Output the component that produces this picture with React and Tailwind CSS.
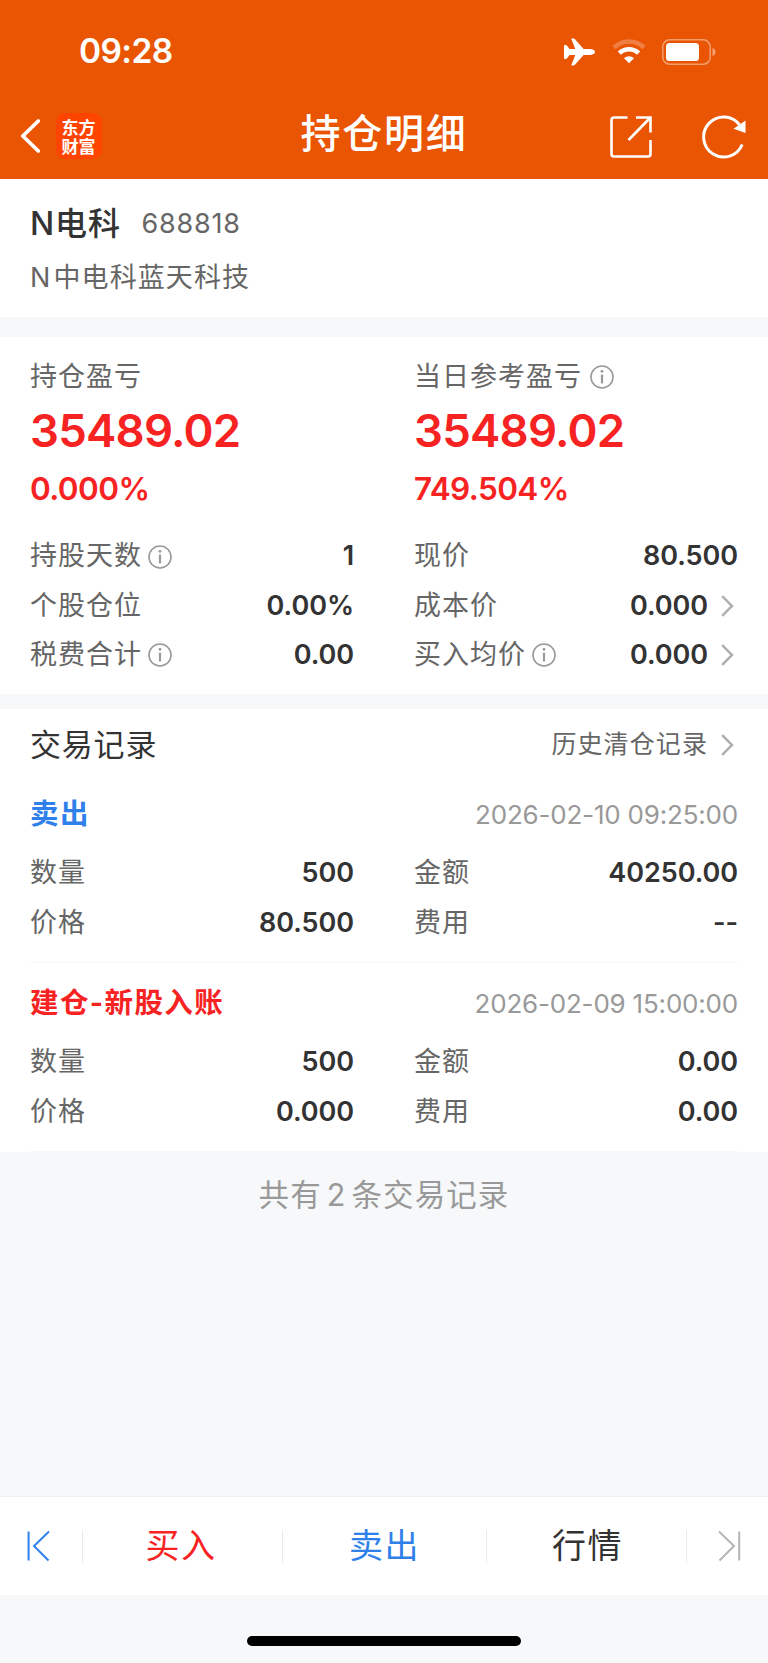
import { useState } from 'react';

const stock = {
  name: 'N电科',
  code: '688818',
  prefix: 'N',
  company: '中电科蓝天科技',
};

const positionRows = [
  { label: '持股天数', value: '1', info: true },
  { label: '现价', value: '80.500' },
  { label: '个股仓位', value: '0.00%' },
  { label: '成本价', value: '0.000', link: true },
  { label: '税费合计', value: '0.00', info: true },
  { label: '买入均价', value: '0.000', info: true, link: true },
];

const records = [
  {
    id: 1,
    type: '卖出',
    side: 'sell',
    time: '2026-02-10 09:25:00',
    rows: [
      { label: '数量', value: '500' },
      { label: '金额', value: '40250.00' },
      { label: '价格', value: '80.500' },
      { label: '费用', value: '--' },
    ],
  },
  {
    id: 2,
    type: '建仓-新股入账',
    side: 'buy',
    time: '2026-02-09 15:00:00',
    rows: [
      { label: '数量', value: '500' },
      { label: '金额', value: '0.00' },
      { label: '价格', value: '0.000' },
      { label: '费用', value: '0.00' },
    ],
  },
];

const InfoIcon = () => (
  <svg className="w-6 h-6 shrink-0" viewBox="0 0 24 24" fill="none" stroke="#999">
    <circle cx="12" cy="12" r="11" strokeWidth="1.6" />
    <path d="M12 9.6V18.4" strokeWidth="2.2" />
    <circle cx="12" cy="6.3" r="1.4" fill="#999" stroke="none" />
  </svg>
);

const ChevronIcon = () => (
  <svg className="w-[13px] h-[22px] mr-[4px] ml-[13px] shrink-0" viewBox="0 0 13 22" fill="none" stroke="#b0b0b0" strokeWidth="2.5">
    <path d="M1.2 1.2L11 11L1.2 20.8" />
  </svg>
);

const StatusBar = () => (
  <div className="h-[103px] flex items-center justify-between pl-[79px] pr-[51px]">
    <span className="text-[33.5px] font-semibold tracking-[-0.6px]">09:28</span>
    <div className="flex items-center">
      <svg className="w-[31px] h-[28px]" viewBox="0 0 31 28" fill="#fff">
        <path d="M31 14C31 15.6 28.6 16.9 26 16.9H19.6L11.2 26.6C10.8 27.1 10.3 27.4 9.7 27.4H8.2C7.6 27.4 7.3 26.9 7.5 26.4L11.3 16.9H5.6L3 20.3C2.7 20.7 2.3 20.9 1.8 20.9H0.6C0.2 20.9 0 20.6 0 20.2V7.8C0 7.4 0.2 7.1 0.6 7.1H1.8C2.3 7.1 2.7 7.3 3 7.7L5.6 11.1H11.3L7.5 1.6C7.3 1.1 7.6 0.6 8.2 0.6H9.7C10.3 0.6 10.8 0.9 11.2 1.4L19.6 11.1H26C28.6 11.1 31 12.4 31 14Z" />
      </svg>
      <svg className="w-[34px] h-[25px] ml-[17px]" viewBox="0 0 34 25" fill="none" stroke="#fff">
        <path d="M2 8.6A21.5 21.5 0 0 1 32 8.6" strokeWidth="4.6" opacity="0.25" />
        <path d="M7.4 14.2A13.8 13.8 0 0 1 26.6 14.2" strokeWidth="4.6" />
        <path d="M17 24.2L12 19.3A7.2 7.2 0 0 1 22 19.3Z" fill="#fff" stroke="none" />
      </svg>
      <svg className="w-[55px] h-[26px] ml-[16px]" viewBox="0 0 55 26" fill="none">
        <rect x="0.8" y="0.8" width="47.4" height="24.4" rx="7" stroke="#fff" strokeWidth="1.5" opacity="0.42" />
        <rect x="4" y="4" width="33" height="18" rx="3.6" fill="#fff" />
        <path d="M50.5 9V17C52.2 16.4 53.6 14.9 53.6 13C53.6 11.1 52.2 9.6 50.5 9Z" fill="#fff" opacity="0.45" />
      </svg>
    </div>
  </div>
);

const NavBar = () => (
  <div className="h-[76px] flex items-start justify-between pl-[20px] pr-[22px]">
    <div className="w-[168px] flex items-center pt-[10px]">
      <svg className="w-[22px] h-[36px]" viewBox="0 0 22 36" fill="none" stroke="#fff" strokeWidth="3.8" strokeLinecap="round" strokeLinejoin="round">
        <path d="M18.3 3L2.8 18L18.3 33" />
      </svg>
      <div className="w-[46px] h-[46px] ml-[13.5px] rounded-[9px] bg-[#ff4400] flex items-center justify-center">
        <p className="font-['Noto_Sans_CJK_SC'] text-[17px] leading-[19px] font-bold">
          东方<br />财富
        </p>
      </div>
    </div>
    <h1 className="ml-[4px] text-[40px] leading-[62px] font-medium tracking-[1.8px]">持仓明细</h1>
    <div className="w-[170px] flex items-center justify-end pt-[12px]">
      <svg className="w-[44px] h-[44px]" viewBox="0 0 44 44" fill="none" stroke="#fff" strokeWidth="2.6">
        <path d="M18.5 2.5H5A2.5 2.5 0 0 0 2.5 5V39A2.5 2.5 0 0 0 5 41.5H39A2.5 2.5 0 0 0 41.5 39V25" />
        <path d="M27 2.5H41.5V17.5" />
        <path d="M41 3L19.5 25" />
      </svg>
      <svg className="w-[44px] h-[44px] ml-[49px]" viewBox="0 0 44 44" fill="none">
        <path d="M38 10.5A20 20 0 1 0 40.2 29.5" stroke="#fff" strokeWidth="3" />
        <path d="M43.5 5.5L31.5 13.8L43.5 18Z" fill="#fff" />
      </svg>
    </div>
  </div>
);

const Row = ({ label, value, info, link }) => (
  <div className="h-[49.2px] flex items-center">
    <span className="text-[27px] tracking-[1px] text-[#666]">{label}</span>
    {info && <span className="ml-[5.5px]"><InfoIcon /></span>}
    <span className="ml-auto text-[27px] font-semibold tracking-[-0.05px] text-[#333]">{value}</span>
    {link && <ChevronIcon />}
  </div>
);

const Profit = ({ label, amount, percent, info }) => (
  <div>
    <div className="h-[40px] flex items-center text-[27px] tracking-[1px] text-[#666]">
      {label}
      {info && <span className="ml-[8px]"><InfoIcon /></span>}
    </div>
    <div className="h-[69px] flex items-center text-[45.5px] font-semibold tracking-[-0.75px] text-[#f72323]">{amount}</div>
    <div className="h-[46px] flex items-center text-[31.5px] font-semibold tracking-[-0.6px] text-[#f72323]">{percent}</div>
  </div>
);

const TradeRecord = ({ record }) => (
  <div className="h-[189px] mx-[30px] border-b-[1.5px] border-[#f6f6f7]">
    <div className="h-[75px] pt-[5px] flex items-center justify-between">
      <span className={`text-[28.5px] font-bold tracking-[1.4px] ${record.side === 'sell' ? 'text-[#2f80ea]' : 'text-[#f72323]'}`}>
        {record.type}
      </span>
      <span className="text-[26px] text-[#999] tracking-[-0.2px]">{record.time}</span>
    </div>
    <div className="grid grid-cols-2 gap-x-[60px]">
      {record.rows.map(row => (
        <Row key={row.label} {...row} />
      ))}
    </div>
  </div>
);

const BottomBar = () => {
  const [active, setActive] = useState(null);

  return (
    <div className="h-[99px] bg-white border-t border-[#eeeff1] flex items-center text-[34px] tracking-[1.6px]">
      <button className="w-[82px] flex pl-[27px]">
        <svg className="w-[24px] h-[32px]" viewBox="0 0 24 32" fill="none" stroke="#2f80ea" strokeWidth="2">
          <path d="M1.6 1.5V30.5" />
          <path d="M22 1.5L7 16L21.5 30.5" />
        </svg>
      </button>
      <div className="w-px h-[33px] bg-[#ebebeb]" />
      <button onClick={() => setActive('buy')} className="w-[199px] pr-[3px] pb-[1px] text-[#f72323]">买入</button>
      <div className="w-px h-[33px] bg-[#ebebeb]" />
      <button onClick={() => setActive('sell')} className="w-[203px] pb-[1px] text-[#2f80ea]">卖出</button>
      <div className="w-px h-[33px] bg-[#ebebeb]" />
      <button onClick={() => setActive('quote')} className="w-[199px] pl-[2px] pb-[1px] text-[#333]">行情</button>
      <div className="w-px h-[33px] bg-[#ebebeb]" />
      <button className="flex-1 flex justify-end pr-[27px]">
        <svg className="w-[24px] h-[32px]" viewBox="0 0 24 32" fill="none" stroke="#b5b5b5" strokeWidth="2">
          <path d="M22.2 1.5V30.5" />
          <path d="M2 1.5L17 16L2.5 30.5" />
        </svg>
      </button>
    </div>
  );
};

const App = () => {
  return (
    <div className="w-[768px] h-[1663px] flex flex-col overflow-hidden bg-[#f6f8fa] font-[Inter,'Noto_Sans_CJK_SC',sans-serif] whitespace-nowrap">
      <header className="h-[179px] bg-[#ea5504] text-white">
        <StatusBar />
        <NavBar />
      </header>

      <section className="h-[138px] bg-white px-[30px] pt-[18px]">
        <div className="h-[54px] flex items-center">
          <span className="text-[32px] font-medium tracking-[0.9px] text-[#333]">{stock.name}</span>
          <span className="ml-[20.5px] text-[27px] tracking-[0.8px] text-[#666]">{stock.code}</span>
        </div>
        <div className="h-[54px] flex items-center text-[27px] tracking-[1.1px] text-[#666]">
          <span className="mr-[2px]">{stock.prefix}</span>
          <span>{stock.company}</span>
        </div>
      </section>

      <section className="h-[357px] mt-[20px] bg-white px-[30px] pt-[20px]">
        <div className="grid grid-cols-2 gap-x-[60px]">
          <Profit label="持仓盈亏" amount="35489.02" percent="0.000%" />
          <Profit label="当日参考盈亏" amount="35489.02" percent="749.504%" info />
        </div>
        <div className="mt-[20px] grid grid-cols-2 gap-x-[60px]">
          {positionRows.map(row => (
            <Row key={row.label} {...row} />
          ))}
        </div>
      </section>

      <section className="mt-[15px] bg-white">
        <div className="h-[65px] pt-[7px] px-[30px] flex items-center justify-between">
          <h2 className="text-[31px] tracking-[0.8px] text-[#333]">交易记录</h2>
          <button className="flex items-center text-[25px] tracking-[1.1px] text-[#666]">
            历史清仓记录
            <ChevronIcon />
          </button>
        </div>
        {records.map(record => (
          <TradeRecord key={record.id} record={record} />
        ))}
      </section>

      <p className="pt-[19px] flex justify-center text-[30.5px] leading-[48px] tracking-[1.1px] text-[#999]">
        <span>共有</span>
        <span className="mx-[5px]">{records.length}</span>
        <span>条交易记录</span>
      </p>

      <footer className="mt-auto h-[167px]">
        <BottomBar />
        <div className="w-[274px] h-[10px] mt-[41px] mx-auto rounded-full bg-black" />
      </footer>
    </div>
  );
};

export default App;
